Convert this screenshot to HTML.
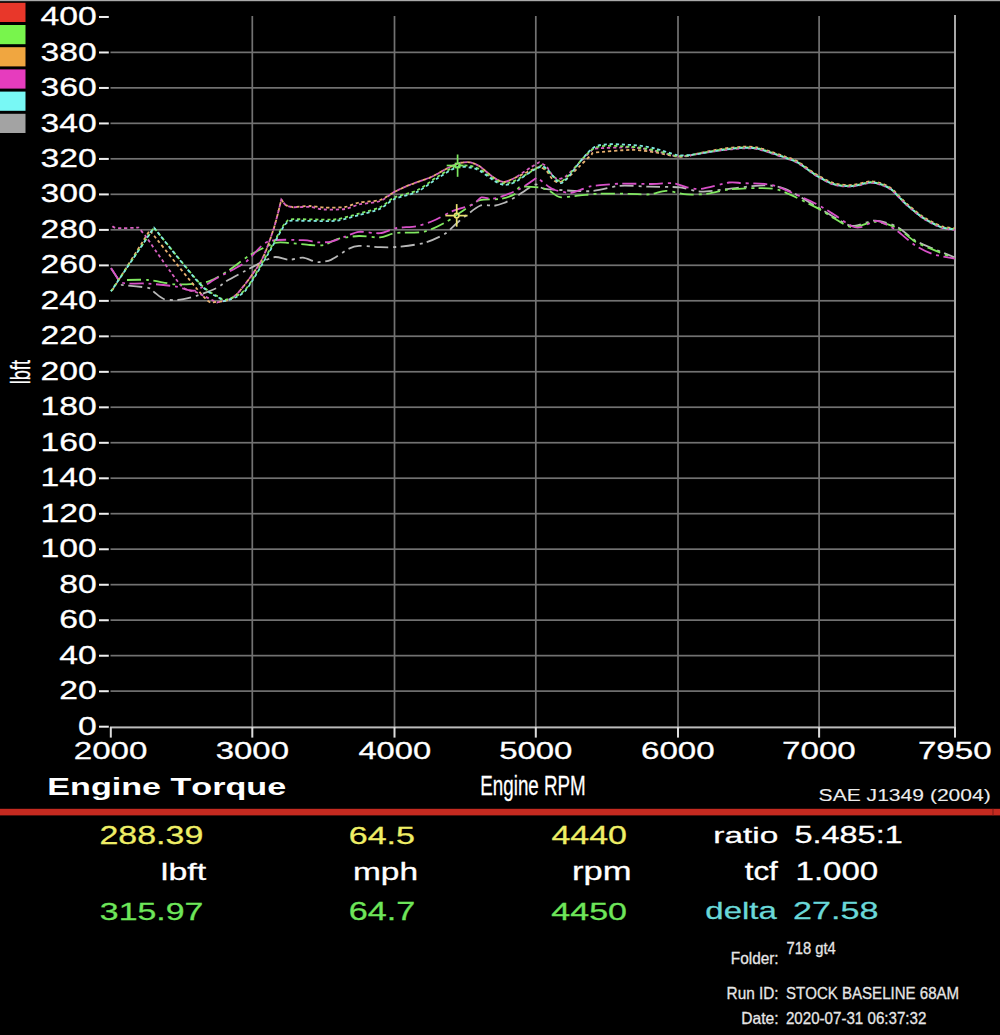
<!DOCTYPE html><html><head><meta charset="utf-8"><style>html,body{margin:0;padding:0;background:#000;width:1000px;height:1035px;overflow:hidden}</style></head><body><svg width="1000" height="1035" viewBox="0 0 1000 1035" style="display:block;font-family:'Liberation Sans',sans-serif;font-kerning:none"><rect x="0" y="0" width="1000" height="1035" fill="#000"/>
<rect x="0" y="0" width="1000" height="1.2" fill="#a9a9a9"/>
<rect x="0" y="2.80" width="25.5" height="19.2" fill="#e8372a"/>
<rect x="0" y="25.00" width="25.5" height="19.2" fill="#78f54c"/>
<rect x="0" y="47.20" width="25.5" height="19.2" fill="#f0a640"/>
<rect x="0" y="69.40" width="25.5" height="19.2" fill="#e63cbe"/>
<rect x="0" y="91.60" width="25.5" height="19.2" fill="#78f8f5"/>
<rect x="0" y="113.80" width="25.5" height="19.2" fill="#a3a3a3"/>
<rect x="110.5" y="690.26" width="844.5" height="1.7" fill="#727272"/>
<rect x="110.5" y="654.78" width="844.5" height="1.7" fill="#727272"/>
<rect x="110.5" y="619.29" width="844.5" height="1.7" fill="#727272"/>
<rect x="110.5" y="583.81" width="844.5" height="1.7" fill="#727272"/>
<rect x="110.5" y="548.32" width="844.5" height="1.7" fill="#727272"/>
<rect x="110.5" y="512.83" width="844.5" height="1.7" fill="#727272"/>
<rect x="110.5" y="477.35" width="844.5" height="1.7" fill="#727272"/>
<rect x="110.5" y="441.86" width="844.5" height="1.7" fill="#727272"/>
<rect x="110.5" y="406.38" width="844.5" height="1.7" fill="#727272"/>
<rect x="110.5" y="370.89" width="844.5" height="1.7" fill="#727272"/>
<rect x="110.5" y="335.40" width="844.5" height="1.7" fill="#727272"/>
<rect x="110.5" y="299.92" width="844.5" height="1.7" fill="#727272"/>
<rect x="110.5" y="264.43" width="844.5" height="1.7" fill="#727272"/>
<rect x="110.5" y="228.95" width="844.5" height="1.7" fill="#727272"/>
<rect x="110.5" y="193.46" width="844.5" height="1.7" fill="#727272"/>
<rect x="110.5" y="157.97" width="844.5" height="1.7" fill="#727272"/>
<rect x="110.5" y="122.49" width="844.5" height="1.7" fill="#727272"/>
<rect x="110.5" y="87.00" width="844.5" height="1.7" fill="#727272"/>
<rect x="110.5" y="51.52" width="844.5" height="1.7" fill="#727272"/>
<rect x="251.45" y="16" width="1.7" height="711.00" fill="#727272"/>
<rect x="393.65" y="16" width="1.7" height="711.00" fill="#727272"/>
<rect x="534.95" y="16" width="1.7" height="711.00" fill="#727272"/>
<rect x="677.15" y="16" width="1.7" height="711.00" fill="#727272"/>
<rect x="818.25" y="16" width="1.7" height="711.00" fill="#727272"/>
<rect x="954" y="15" width="2" height="712" fill="#a8a8a8"/>
<rect x="110" y="726.4" width="846" height="2" fill="#bcbcbc"/>
<rect x="109.80" y="727" width="2" height="10.6" fill="#dcdcdc"/>
<rect x="251.30" y="727" width="2" height="10.6" fill="#dcdcdc"/>
<rect x="393.50" y="727" width="2" height="10.6" fill="#dcdcdc"/>
<rect x="534.80" y="727" width="2" height="10.6" fill="#dcdcdc"/>
<rect x="677.00" y="727" width="2" height="10.6" fill="#dcdcdc"/>
<rect x="818.10" y="727" width="2" height="10.6" fill="#dcdcdc"/>
<rect x="954.00" y="727" width="2" height="10.6" fill="#dcdcdc"/>
<rect x="99" y="725.70" width="9.8" height="2" fill="#eeeeee"/>
<rect x="99" y="690.21" width="9.8" height="2" fill="#eeeeee"/>
<rect x="99" y="654.73" width="9.8" height="2" fill="#eeeeee"/>
<rect x="99" y="619.24" width="9.8" height="2" fill="#eeeeee"/>
<rect x="99" y="583.76" width="9.8" height="2" fill="#eeeeee"/>
<rect x="99" y="548.27" width="9.8" height="2" fill="#eeeeee"/>
<rect x="99" y="512.78" width="9.8" height="2" fill="#eeeeee"/>
<rect x="99" y="477.30" width="9.8" height="2" fill="#eeeeee"/>
<rect x="99" y="441.81" width="9.8" height="2" fill="#eeeeee"/>
<rect x="99" y="406.33" width="9.8" height="2" fill="#eeeeee"/>
<rect x="99" y="370.84" width="9.8" height="2" fill="#eeeeee"/>
<rect x="99" y="335.35" width="9.8" height="2" fill="#eeeeee"/>
<rect x="99" y="299.87" width="9.8" height="2" fill="#eeeeee"/>
<rect x="99" y="264.38" width="9.8" height="2" fill="#eeeeee"/>
<rect x="99" y="228.90" width="9.8" height="2" fill="#eeeeee"/>
<rect x="99" y="193.41" width="9.8" height="2" fill="#eeeeee"/>
<rect x="99" y="157.92" width="9.8" height="2" fill="#eeeeee"/>
<rect x="99" y="122.44" width="9.8" height="2" fill="#eeeeee"/>
<rect x="99" y="86.95" width="9.8" height="2" fill="#eeeeee"/>
<rect x="99" y="51.47" width="9.8" height="2" fill="#eeeeee"/>
<rect x="99" y="15.98" width="9.8" height="2" fill="#eeeeee"/>
<text transform="translate(79.36 734.76) scale(1.3275 1)" x="-0.99" y="0" font-size="25.38" fill="#fff" stroke="#fff" stroke-width="0.28">0</text>
<text transform="translate(61.00 699.27) scale(1.3275 1)" x="-1.28" y="0" font-size="25.38" fill="#fff" stroke="#fff" stroke-width="0.28">20</text>
<text transform="translate(60.08 663.79) scale(1.3275 1)" x="-0.58" y="0" font-size="25.38" fill="#fff" stroke="#fff" stroke-width="0.28">40</text>
<text transform="translate(61.01 628.30) scale(1.3275 1)" x="-1.29" y="0" font-size="25.38" fill="#fff" stroke="#fff" stroke-width="0.28">60</text>
<text transform="translate(60.77 592.82) scale(1.3275 1)" x="-1.10" y="0" font-size="25.38" fill="#fff" stroke="#fff" stroke-width="0.28">80</text>
<text transform="translate(43.13 557.33) scale(1.3275 1)" x="-1.93" y="0" font-size="25.38" fill="#fff" stroke="#fff" stroke-width="0.28">100</text>
<text transform="translate(43.13 521.84) scale(1.3275 1)" x="-1.93" y="0" font-size="25.38" fill="#fff" stroke="#fff" stroke-width="0.28">120</text>
<text transform="translate(43.13 486.36) scale(1.3275 1)" x="-1.93" y="0" font-size="25.38" fill="#fff" stroke="#fff" stroke-width="0.28">140</text>
<text transform="translate(43.13 450.87) scale(1.3275 1)" x="-1.93" y="0" font-size="25.38" fill="#fff" stroke="#fff" stroke-width="0.28">160</text>
<text transform="translate(43.13 415.39) scale(1.3275 1)" x="-1.93" y="0" font-size="25.38" fill="#fff" stroke="#fff" stroke-width="0.28">180</text>
<text transform="translate(42.26 379.90) scale(1.3275 1)" x="-1.28" y="0" font-size="25.38" fill="#fff" stroke="#fff" stroke-width="0.28">200</text>
<text transform="translate(42.26 344.41) scale(1.3275 1)" x="-1.28" y="0" font-size="25.38" fill="#fff" stroke="#fff" stroke-width="0.28">220</text>
<text transform="translate(42.26 308.93) scale(1.3275 1)" x="-1.28" y="0" font-size="25.38" fill="#fff" stroke="#fff" stroke-width="0.28">240</text>
<text transform="translate(42.26 273.44) scale(1.3275 1)" x="-1.28" y="0" font-size="25.38" fill="#fff" stroke="#fff" stroke-width="0.28">260</text>
<text transform="translate(42.26 237.96) scale(1.3275 1)" x="-1.28" y="0" font-size="25.38" fill="#fff" stroke="#fff" stroke-width="0.28">280</text>
<text transform="translate(41.85 202.47) scale(1.3275 1)" x="-0.97" y="0" font-size="25.38" fill="#fff" stroke="#fff" stroke-width="0.28">300</text>
<text transform="translate(41.85 166.98) scale(1.3275 1)" x="-0.97" y="0" font-size="25.38" fill="#fff" stroke="#fff" stroke-width="0.28">320</text>
<text transform="translate(41.85 131.50) scale(1.3275 1)" x="-0.97" y="0" font-size="25.38" fill="#fff" stroke="#fff" stroke-width="0.28">340</text>
<text transform="translate(41.85 96.01) scale(1.3275 1)" x="-0.97" y="0" font-size="25.38" fill="#fff" stroke="#fff" stroke-width="0.28">360</text>
<text transform="translate(41.85 60.53) scale(1.3275 1)" x="-0.97" y="0" font-size="25.38" fill="#fff" stroke="#fff" stroke-width="0.28">380</text>
<text transform="translate(41.34 25.04) scale(1.3275 1)" x="-0.58" y="0" font-size="25.38" fill="#fff" stroke="#fff" stroke-width="0.28">400</text>
<text transform="translate(75.44 759.16) scale(1.3587 1)" x="-1.23" y="0" font-size="24.38" fill="#fff" stroke="#fff" stroke-width="0.28">2000</text>
<text transform="translate(216.94 759.16) scale(1.3510 1)" x="-0.93" y="0" font-size="24.38" fill="#fff" stroke="#fff" stroke-width="0.28">3000</text>
<text transform="translate(359.14 759.16) scale(1.3416 1)" x="-0.56" y="0" font-size="24.38" fill="#fff" stroke="#fff" stroke-width="0.28">4000</text>
<text transform="translate(500.44 759.16) scale(1.3523 1)" x="-0.98" y="0" font-size="24.38" fill="#fff" stroke="#fff" stroke-width="0.28">5000</text>
<text transform="translate(642.64 759.16) scale(1.3591 1)" x="-1.24" y="0" font-size="24.38" fill="#fff" stroke="#fff" stroke-width="0.28">6000</text>
<text transform="translate(783.74 759.16) scale(1.3594 1)" x="-1.25" y="0" font-size="24.38" fill="#fff" stroke="#fff" stroke-width="0.28">7000</text>
<text transform="translate(919.64 759.16) scale(1.3594 1)" x="-1.25" y="0" font-size="24.38" fill="#fff" stroke="#fff" stroke-width="0.28">7950</text>
<text transform="translate(49.60 795.20) scale(1.4048 1)" x="-1.62" y="0" font-size="24.29" font-weight="bold" fill="#fff">Engine Torque</text>
<text transform="translate(481.84 795.46) scale(0.6836 1)" x="-2.26" y="0" font-size="27.49" fill="#fff" stroke="#fff" stroke-width="0.28">Engine RPM</text>
<text transform="translate(819.55 800.65) scale(1.2426 1)" x="-0.77" y="0" font-size="16.97" fill="#ececec" stroke="#ececec" stroke-width="0.10">SAE J1349 (2004)</text>
<g transform="translate(29.9 383.2) rotate(-90)"><text transform="translate(0.14 -0.14) scale(0.6688 1)" x="-1.83" y="0" font-size="27.21" fill="#fff" stroke="#fff" stroke-width="0.28">lbft</text></g>
<rect x="0" y="808.8" width="1000" height="6.6" fill="#c42a20"/>
<rect x="992.5" y="808.8" width="1" height="6.6" fill="#7a1a14"/>
<text transform="translate(101.14 844.36) scale(1.3377 1)" x="-1.28" y="0" font-size="25.38" fill="#eeee66" stroke="#eeee66" stroke-width="0.28">288.39</text>
<text transform="translate(350.54 843.86) scale(1.3867 1)" x="-1.25" y="0" font-size="24.52" fill="#eeee66" stroke="#eeee66" stroke-width="0.28">64.5</text>
<text transform="translate(552.14 844.26) scale(1.3396 1)" x="-0.58" y="0" font-size="25.38" fill="#eeee66" stroke="#eeee66" stroke-width="0.28">4440</text>
<text transform="translate(715.54 843.46) scale(1.4822 1)" x="-1.50" y="0" font-size="22.52" fill="#fff" stroke="#fff" stroke-width="0.28">ratio</text>
<text transform="translate(795.84 843.46) scale(1.3961 1)" x="-0.93" y="0" font-size="23.23" fill="#fff" stroke="#fff" stroke-width="0.28">5.485:1</text>
<text transform="translate(163.14 880.36) scale(1.3872 1)" x="-1.65" y="0" font-size="24.45" fill="#fff" stroke="#fff" stroke-width="0.28">lbft</text>
<text transform="translate(355.14 880.36) scale(1.4168 1)" x="-1.57" y="0" font-size="23.63" fill="#fff" stroke="#fff" stroke-width="0.28">mph</text>
<text transform="translate(574.34 880.26) scale(1.3499 1)" x="-1.70" y="0" font-size="25.59" fill="#fff" stroke="#fff" stroke-width="0.28">rpm</text>
<text transform="translate(745.14 880.46) scale(1.2610 1)" x="-0.38" y="0" font-size="24.90" fill="#fff" stroke="#fff" stroke-width="0.28">tcf</text>
<text transform="translate(798.04 880.46) scale(1.2810 1)" x="-1.97" y="0" font-size="25.81" fill="#fff" stroke="#fff" stroke-width="0.28">1.000</text>
<text transform="translate(101.14 919.76) scale(1.3723 1)" x="-0.94" y="0" font-size="24.66" fill="#6ee65a" stroke="#6ee65a" stroke-width="0.28">315.97</text>
<text transform="translate(350.54 919.86) scale(1.3458 1)" x="-1.29" y="0" font-size="25.38" fill="#6ee65a" stroke="#6ee65a" stroke-width="0.28">64.7</text>
<text transform="translate(552.14 919.86) scale(1.3865 1)" x="-0.56" y="0" font-size="24.52" fill="#6ee65a" stroke="#6ee65a" stroke-width="0.28">4450</text>
<text transform="translate(706.74 919.36) scale(1.3796 1)" x="-1.00" y="0" font-size="23.90" fill="#6ad8d8" stroke="#6ad8d8" stroke-width="0.28">delta</text>
<text transform="translate(794.74 919.36) scale(1.3761 1)" x="-1.25" y="0" font-size="24.81" fill="#6ad8d8" stroke="#6ad8d8" stroke-width="0.28">27.58</text>
<text transform="translate(732.04 963.56) scale(0.9595 1)" x="-1.32" y="0" font-size="16.04" fill="#e6e6e6" stroke="#e6e6e6" stroke-width="0.28">Folder:</text>
<text transform="translate(787.34 954.46) scale(0.9431 1)" x="-0.80" y="0" font-size="15.64" fill="#e6e6e6" stroke="#e6e6e6" stroke-width="0.28">718 gt4</text>
<text transform="translate(727.84 999.26) scale(0.9096 1)" x="-1.39" y="0" font-size="16.89" fill="#e6e6e6" stroke="#e6e6e6" stroke-width="0.28">Run ID:</text>
<text transform="translate(786.64 999.26) scale(0.9049 1)" x="-0.76" y="0" font-size="16.64" fill="#e6e6e6" stroke="#e6e6e6" stroke-width="0.28">STOCK BASELINE 68AM</text>
<text transform="translate(742.54 1024.46) scale(0.9868 1)" x="-1.30" y="0" font-size="15.87" fill="#e6e6e6" stroke="#e6e6e6" stroke-width="0.28">Date:</text>
<text transform="translate(786.64 1024.46) scale(0.9685 1)" x="-0.79" y="0" font-size="15.64" fill="#e6e6e6" stroke="#e6e6e6" stroke-width="0.28">2020-07-31 06:37:32</text>
<path d="M111.00,268.20 C111.00,268.20 121.80,285.00 121.80,285.00 C121.80,285.00 143.71,286.87 148.00,287.80 C152.29,288.73 151.89,290.51 154.00,292.00 C156.11,293.49 160.63,297.93 163.80,299.00 C166.97,300.07 173.51,300.40 177.80,300.00 C182.09,299.60 190.77,297.63 196.00,296.00 C201.23,294.37 212.87,289.83 217.00,287.80 C221.13,285.77 223.27,283.04 227.00,280.80 C230.73,278.56 240.47,273.43 245.00,271.00 C249.53,268.57 257.00,264.47 261.00,262.60 C265.00,260.73 271.27,257.37 275.00,257.00 C278.73,256.63 285.27,259.71 289.00,259.80 C292.73,259.89 299.27,257.41 303.00,257.70 C306.73,257.99 313.27,261.72 317.00,262.00 C320.73,262.28 326.73,261.59 331.00,259.80 C335.27,258.01 345.27,250.47 349.00,248.60 C352.73,246.73 354.87,245.99 359.00,245.80 C363.13,245.61 375.07,247.04 380.00,247.20 C384.93,247.36 390.13,247.56 396.00,247.00 C401.87,246.44 417.47,244.76 424.00,243.00 C430.53,241.24 440.33,236.71 445.00,233.80 C449.67,230.89 454.33,224.93 459.00,221.20 C463.67,217.47 475.33,207.85 480.00,205.80 C484.67,203.75 490.83,206.17 494.00,205.80 C497.17,205.43 501.00,204.12 503.80,203.00 C506.60,201.88 510.84,199.85 515.00,197.40 C519.16,194.95 531.00,185.75 535.00,184.60 C539.00,183.45 537.67,187.92 545.00,188.80 C552.33,189.68 580.00,191.60 590.00,191.20 C600.00,190.80 612.00,186.40 620.00,185.80 C628.00,185.20 642.00,186.49 650.00,186.70 C658.00,186.91 673.20,186.75 680.00,187.40 C686.80,188.05 694.47,191.41 701.00,191.60 C707.53,191.79 720.60,189.64 729.00,188.80 C737.40,187.96 756.53,185.30 764.00,185.30 C771.47,185.30 778.07,186.01 785.00,188.80 C791.93,191.59 809.47,202.44 816.00,206.20 C822.53,209.96 829.20,214.36 834.00,217.00 C838.80,219.64 846.53,225.52 852.00,226.00 C857.47,226.48 869.00,220.49 875.00,220.60 C881.00,220.71 891.67,224.16 897.00,226.80 C902.33,229.44 910.20,237.51 915.00,240.40 C919.80,243.29 927.67,246.22 933.00,248.50 C938.33,250.78 955.00,257.50 955.00,257.50" fill="none" stroke="#b8b8b8" stroke-width="1.8" stroke-dasharray="14 5 3 4.5" stroke-dashoffset="0.0" stroke-opacity="1.00"/>
<path d="M127.00,280.00 C127.00,280.00 141.60,279.43 148.00,280.00 C154.40,280.57 168.60,283.82 175.00,284.30 C181.40,284.78 191.33,284.07 196.00,283.60 C200.67,283.13 205.73,282.48 210.00,280.80 C214.27,279.12 223.33,273.99 228.00,271.00 C232.67,268.01 241.53,260.83 245.00,258.40 C248.47,255.97 250.00,254.85 254.00,252.80 C258.00,250.75 270.33,244.31 275.00,243.00 C279.67,241.69 284.33,242.73 289.00,243.00 C293.67,243.27 305.33,244.73 310.00,245.00 C314.67,245.27 320.27,245.83 324.00,245.00 C327.73,244.17 333.33,240.00 338.00,238.80 C342.67,237.60 353.40,236.19 359.00,236.00 C364.60,235.81 375.07,237.80 380.00,237.40 C384.93,237.00 390.13,233.76 396.00,233.00 C401.87,232.24 417.47,233.09 424.00,231.70 C430.53,230.31 439.40,225.68 445.00,222.60 C450.60,219.52 461.33,211.59 466.00,208.60 C470.67,205.61 475.33,201.51 480.00,200.20 C484.67,198.89 496.33,199.63 501.00,198.80 C505.67,197.97 512.47,195.57 515.00,194.00 C517.53,192.43 516.67,187.85 520.00,187.00 C523.33,186.15 536.00,187.04 540.00,187.60 C544.00,188.16 547.33,189.92 550.00,191.20 C552.67,192.48 556.00,196.64 560.00,197.20 C564.00,197.76 574.67,195.88 580.00,195.40 C585.33,194.92 593.47,193.81 600.00,193.60 C606.53,193.39 622.33,193.69 629.00,193.80 C635.67,193.91 645.07,194.79 650.00,194.40 C654.93,194.01 661.07,190.90 666.00,190.90 C670.93,190.90 681.40,194.03 687.00,194.40 C692.60,194.77 702.40,194.35 708.00,193.70 C713.60,193.05 722.47,190.25 729.00,189.50 C735.53,188.75 750.20,187.99 757.00,188.10 C763.80,188.21 772.13,187.73 780.00,190.30 C787.87,192.87 808.80,203.68 816.00,207.40 C823.20,211.12 829.20,215.56 834.00,218.20 C838.80,220.84 846.53,226.72 852.00,227.20 C857.47,227.68 869.00,221.69 875.00,221.80 C881.00,221.91 891.67,225.36 897.00,228.00 C902.33,230.64 910.20,238.71 915.00,241.60 C919.80,244.49 927.67,247.42 933.00,249.70 C938.33,251.98 955.00,258.70 955.00,258.70" fill="none" stroke="#80e860" stroke-width="1.8" stroke-dasharray="14 5 3 4.5" stroke-dashoffset="0.0" stroke-opacity="1.00"/>
<path d="M111.00,268.00 C111.00,268.00 120.00,282.00 120.00,282.00 C120.00,282.00 123.27,283.39 127.00,283.60 C130.73,283.81 141.60,283.23 148.00,283.60 C154.40,283.97 168.79,285.47 175.00,286.40 C181.21,287.33 189.00,291.72 194.60,290.60 C200.20,289.48 210.28,281.73 217.00,278.00 C223.72,274.27 238.20,267.45 245.00,262.60 C251.80,257.75 260.27,244.59 268.00,241.60 C275.73,238.61 296.47,240.11 303.00,240.20 C309.53,240.29 313.27,242.11 317.00,242.30 C320.73,242.49 327.27,242.35 331.00,241.60 C334.73,240.85 341.27,238.01 345.00,236.70 C348.73,235.39 354.33,232.27 359.00,231.80 C363.67,231.33 375.07,233.68 380.00,233.20 C384.93,232.72 391.07,229.15 396.00,228.20 C400.93,227.25 411.96,227.13 417.00,226.10 C422.04,225.07 429.13,222.46 433.80,220.50 C438.47,218.54 446.77,213.55 452.00,211.40 C457.23,209.25 469.08,206.27 473.00,204.40 C476.92,202.53 478.97,198.15 481.40,197.40 C483.83,196.65 488.59,198.89 491.20,198.80 C493.81,198.71 497.16,198.03 501.00,196.70 C504.84,195.37 515.20,191.37 520.00,188.80 C524.80,186.23 537.00,177.40 537.00,177.40 C537.00,177.40 547.60,185.92 550.00,187.60 C552.40,189.28 552.33,189.28 555.00,190.00 C557.67,190.72 566.67,193.00 570.00,193.00 C573.33,193.00 577.33,190.88 580.00,190.00 C582.67,189.12 587.33,187.04 590.00,186.40 C592.67,185.76 595.73,185.57 600.00,185.20 C604.27,184.83 615.33,183.76 622.00,183.60 C628.67,183.44 643.20,184.05 650.00,184.00 C656.80,183.95 668.07,182.75 673.00,183.20 C677.93,183.65 683.27,186.65 687.00,187.40 C690.73,188.15 695.40,189.45 701.00,188.80 C706.60,188.15 723.40,183.25 729.00,182.50 C734.60,181.75 738.33,183.01 743.00,183.20 C747.67,183.39 759.07,183.31 764.00,183.90 C768.93,184.49 773.07,184.95 780.00,187.60 C786.93,190.25 808.80,200.20 816.00,203.80 C823.20,207.40 829.20,211.60 834.00,214.60 C838.80,217.60 848.40,224.62 852.00,226.30 C855.60,227.98 857.88,227.92 861.00,227.20 C864.12,226.48 872.28,221.38 875.40,220.90 C878.52,220.42 881.52,222.28 884.40,223.60 C887.28,224.92 892.92,227.92 897.00,230.80 C901.08,233.68 910.20,242.08 915.00,245.20 C919.80,248.32 927.67,252.40 933.00,254.20 C938.33,256.00 955.00,258.70 955.00,258.70" fill="none" stroke="#d850c8" stroke-width="1.8" stroke-dasharray="14 5 3 4.5" stroke-dashoffset="0.0" stroke-opacity="1.00"/>
<path d="M112.00,290.60 C112.00,290.60 149.80,230.40 149.80,230.40 C149.80,230.40 194.31,286.45 203.00,296.00 C211.69,305.55 210.73,302.00 215.00,302.00 C219.27,302.00 228.87,301.44 235.00,296.00 C241.13,290.56 255.85,270.13 261.00,261.20 C266.15,252.27 270.89,237.21 273.60,229.00 C276.31,220.79 281.30,199.60 281.30,199.60 C281.30,199.60 284.41,204.17 286.00,205.20 C287.59,206.23 293.20,207.30 293.20,207.30 C293.20,207.30 305.89,205.97 310.00,206.00 C314.11,206.03 319.33,207.37 324.00,207.50 C328.67,207.63 340.33,207.67 345.00,207.00 C349.67,206.33 354.33,203.43 359.00,202.50 C363.67,201.57 375.25,201.43 380.00,200.00 C384.75,198.57 390.60,193.83 394.60,191.80 C398.60,189.77 405.15,186.76 410.00,184.80 C414.85,182.84 425.96,179.34 431.00,177.10 C436.04,174.86 444.07,169.87 447.80,168.00 C451.53,166.13 456.01,163.85 459.00,163.10 C461.99,162.35 467.40,161.93 470.20,162.40 C473.00,162.87 476.83,164.55 480.00,166.60 C483.17,168.65 490.83,175.75 494.00,177.80 C497.17,179.85 501.00,182.00 503.80,182.00 C506.60,182.00 511.37,179.36 515.00,177.80 C518.63,176.24 527.75,171.73 531.00,170.30 C534.25,168.87 537.35,167.02 539.40,167.08 C541.45,167.14 544.72,169.22 546.40,170.76 C548.08,172.30 550.51,177.07 552.00,178.60 C553.49,180.13 555.73,182.13 557.60,182.24 C559.47,182.35 563.01,181.58 566.00,179.40 C568.99,177.22 576.64,169.12 580.00,165.87 C583.36,162.61 589.15,156.78 591.20,155.00 C593.25,153.22 589.96,153.18 595.40,152.50 C600.84,151.82 624.05,149.92 632.00,149.90 C639.95,149.88 649.00,151.45 655.00,152.36 C661.00,153.27 672.33,156.31 677.00,156.73 C681.67,157.15 690.00,155.53 690.00,155.53" fill="none" stroke="#e8b070" stroke-width="1.8" stroke-dasharray="3.2 2.8" stroke-dashoffset="0.0" stroke-opacity="1.00"/>
<path d="M690.00,155.53 C690.00,155.53 696.73,153.72 701.00,152.82 C705.27,151.93 716.40,149.62 722.00,148.80 C727.60,147.98 738.33,146.89 743.00,146.70 C747.67,146.51 753.27,146.75 757.00,147.40 C760.73,148.05 767.27,150.39 771.00,151.60 C774.73,152.81 781.40,155.17 785.00,156.50 C788.60,157.83 793.87,159.24 798.00,161.60 C802.13,163.96 811.20,171.32 816.00,174.20 C820.80,177.08 829.20,181.76 834.00,183.20 C838.80,184.64 847.20,185.24 852.00,185.00 C856.80,184.76 866.16,181.64 870.00,181.40 C873.84,181.16 877.92,182.24 880.80,183.20 C883.68,184.16 888.24,185.96 891.60,188.60 C894.96,191.24 901.68,199.16 906.00,203.00 C910.32,206.84 919.20,214.28 924.00,217.40 C928.80,220.52 937.87,224.96 942.00,226.40 C946.13,227.84 955.00,228.20 955.00,228.20" fill="none" stroke="#e8b070" stroke-width="1.8" stroke-dasharray="3.2 2.8" stroke-dashoffset="0.0" stroke-opacity="1.00"/>
<path d="M110.60,224.00 C110.60,224.00 112.27,227.52 116.00,228.00 C119.73,228.48 138.60,227.60 138.60,227.60 C138.60,227.60 145.60,236.00 145.60,236.00 C145.60,236.00 173.88,277.53 180.60,285.00 C187.32,292.47 191.15,289.67 196.00,292.00 C200.85,294.33 217.00,302.50 217.00,302.50 C217.00,302.50 226.93,300.59 230.00,299.00 C233.07,297.41 235.87,295.64 240.00,290.60 C244.13,285.56 256.52,269.41 261.00,261.20 C265.48,252.99 270.89,237.21 273.60,229.00 C276.31,220.79 281.30,199.60 281.30,199.60 C281.30,199.60 284.41,204.17 286.00,205.20 C287.59,206.23 293.20,207.30 293.20,207.30 C293.20,207.30 305.89,206.71 310.00,207.00 C314.11,207.29 319.33,209.23 324.00,209.50 C328.67,209.77 340.33,209.67 345.00,209.00 C349.67,208.33 354.33,205.57 359.00,204.50 C363.67,203.43 375.25,202.69 380.00,201.00 C384.75,199.31 390.60,193.96 394.60,191.80 C398.60,189.64 405.15,186.76 410.00,184.80 C414.85,182.84 425.96,179.34 431.00,177.10 C436.04,174.86 444.07,169.87 447.80,168.00 C451.53,166.13 456.01,163.85 459.00,163.10 C461.99,162.35 467.40,161.93 470.20,162.40 C473.00,162.87 476.83,164.55 480.00,166.60 C483.17,168.65 490.83,175.75 494.00,177.80 C497.17,179.85 501.00,182.00 503.80,182.00 C506.60,182.00 511.37,179.79 515.00,177.80 C518.63,175.81 527.75,169.18 531.00,167.10 C534.25,165.02 539.40,162.20 539.40,162.20 C539.40,162.20 544.72,164.72 546.40,166.40 C548.08,168.08 550.51,173.12 552.00,174.80 C553.49,176.48 555.73,178.81 557.60,179.00 C559.47,179.19 563.01,178.44 566.00,176.20 C568.99,173.96 576.64,165.56 580.00,162.20 C583.36,158.84 589.15,152.83 591.20,151.00 C593.25,149.17 589.96,148.97 595.40,148.50 C600.84,148.03 624.05,147.17 632.00,147.50 C639.95,147.83 649.00,149.83 655.00,151.00 C661.00,152.17 672.33,155.70 677.00,156.30 C681.67,156.90 690.00,155.50 690.00,155.50" fill="none" stroke="#d860c0" stroke-width="1.8" stroke-dasharray="3.2 2.8" stroke-dashoffset="3.0" stroke-opacity="1.00"/>
<path d="M690.00,155.50 C690.00,155.50 696.73,154.07 701.00,153.39 C705.27,152.71 716.40,151.08 722.00,150.40 C727.60,149.72 738.33,148.49 743.00,148.30 C747.67,148.11 753.27,148.35 757.00,149.00 C760.73,149.65 767.27,151.99 771.00,153.20 C774.73,154.41 781.40,156.77 785.00,158.10 C788.60,159.43 793.87,160.84 798.00,163.20 C802.13,165.56 811.20,172.92 816.00,175.80 C820.80,178.68 829.20,183.36 834.00,184.80 C838.80,186.24 847.20,186.84 852.00,186.60 C856.80,186.36 866.16,183.24 870.00,183.00 C873.84,182.76 877.92,183.84 880.80,184.80 C883.68,185.76 888.24,187.56 891.60,190.20 C894.96,192.84 901.68,200.76 906.00,204.60 C910.32,208.44 919.20,215.88 924.00,219.00 C928.80,222.12 937.87,226.56 942.00,228.00 C946.13,229.44 955.00,229.80 955.00,229.80" fill="none" stroke="#d860c0" stroke-width="1.8" stroke-dasharray="3.2 2.8" stroke-dashoffset="1.5" stroke-opacity="1.00"/>
<path d="M111.00,291.30 C111.00,291.30 154.00,227.60 154.00,227.60 C154.00,227.60 191.20,274.27 200.00,283.60 C208.80,292.93 216.67,295.41 220.00,297.60 C223.33,299.79 221.67,301.01 225.00,300.00 C228.33,298.99 239.27,296.29 245.00,290.00 C250.73,283.71 263.07,261.12 268.00,252.80 C272.93,244.48 279.39,231.89 282.00,227.60 C284.61,223.31 287.60,220.60 287.60,220.60 C287.60,220.60 288.35,219.33 293.20,219.20 C298.05,219.07 318.03,219.63 324.00,219.60 C329.97,219.57 333.33,219.80 338.00,219.00 C342.67,218.20 353.40,215.16 359.00,213.60 C364.60,212.04 375.25,209.46 380.00,207.30 C384.75,205.14 389.67,199.65 394.60,197.40 C399.53,195.15 411.21,193.20 417.00,190.40 C422.79,187.60 432.77,179.65 438.00,176.40 C443.23,173.15 451.91,167.39 456.20,166.00 C460.49,164.61 467.03,165.55 470.20,166.00 C473.37,166.45 476.83,167.64 480.00,169.40 C483.17,171.16 490.83,177.33 494.00,179.20 C497.17,181.07 501.00,183.21 503.80,183.40 C506.60,183.59 509.88,183.05 515.00,180.60 C520.12,178.15 542.20,165.00 542.20,165.00 C542.20,165.00 554.83,178.67 558.00,180.40 C561.17,182.13 561.09,182.32 566.00,178.00 C570.91,173.68 586.00,152.13 594.80,148.00 C603.60,143.87 623.97,146.67 632.00,147.00 C640.03,147.33 649.00,149.30 655.00,150.50 C661.00,151.70 672.33,155.37 677.00,156.00 C681.67,156.63 690.00,155.20 690.00,155.20" fill="none" stroke="#80e860" stroke-width="1.8" stroke-dasharray="3.2 2.8" stroke-dashoffset="0.0" stroke-opacity="1.00"/>
<path d="M690.00,155.20 C690.00,155.20 696.73,153.85 701.00,153.10 C705.27,152.35 716.40,150.35 722.00,149.60 C727.60,148.85 738.33,147.69 743.00,147.50 C747.67,147.31 753.27,147.55 757.00,148.20 C760.73,148.85 767.27,151.19 771.00,152.40 C774.73,153.61 781.40,155.97 785.00,157.30 C788.60,158.63 793.87,160.04 798.00,162.40 C802.13,164.76 811.20,172.12 816.00,175.00 C820.80,177.88 829.20,182.56 834.00,184.00 C838.80,185.44 847.20,186.04 852.00,185.80 C856.80,185.56 866.16,182.44 870.00,182.20 C873.84,181.96 877.92,183.04 880.80,184.00 C883.68,184.96 888.24,186.76 891.60,189.40 C894.96,192.04 901.68,199.96 906.00,203.80 C910.32,207.64 919.20,215.08 924.00,218.20 C928.80,221.32 937.87,225.76 942.00,227.20 C946.13,228.64 955.00,229.00 955.00,229.00" fill="none" stroke="#80e860" stroke-width="1.8" stroke-dasharray="3.2 2.8" stroke-dashoffset="3.0" stroke-opacity="1.00"/>
<path d="M111.00,291.30 C111.00,291.30 154.00,227.65 154.00,227.65 C154.00,227.65 191.20,274.74 200.00,284.18 C208.80,293.61 216.67,296.18 220.00,298.41 C223.33,300.63 221.67,301.84 225.00,300.87 C228.33,299.89 239.27,297.32 245.00,291.10 C250.73,284.87 263.07,262.43 268.00,254.16 C272.93,245.90 279.39,233.37 282.00,229.10 C284.61,224.83 286.11,223.22 287.60,222.10 C289.09,220.98 288.35,220.83 293.20,220.70 C298.05,220.57 318.03,221.13 324.00,221.10 C329.97,221.07 333.33,221.30 338.00,220.50 C342.67,219.70 353.40,216.66 359.00,215.10 C364.60,213.54 375.25,210.96 380.00,208.80 C384.75,206.64 389.67,201.15 394.60,198.90 C399.53,196.65 411.21,194.70 417.00,191.90 C422.79,189.10 432.77,181.15 438.00,177.90 C443.23,174.65 451.91,168.89 456.20,167.50 C460.49,166.11 467.03,167.05 470.20,167.50 C473.37,167.95 476.83,169.14 480.00,170.90 C483.17,172.66 490.83,178.83 494.00,180.70 C497.17,182.57 501.00,184.71 503.80,184.90 C506.60,185.09 509.88,184.55 515.00,182.10 C520.12,179.65 536.47,166.53 542.20,166.50 C547.93,166.47 554.83,180.17 558.00,181.90 C561.17,183.63 561.09,184.17 566.00,179.50 C570.91,174.83 586.00,151.51 594.80,146.91 C603.60,142.31 623.97,144.79 632.00,145.00 C640.03,145.21 649.00,147.16 655.00,148.50 C661.00,149.84 672.33,154.15 677.00,155.02 C681.67,155.89 690.00,155.00 690.00,155.00" fill="none" stroke="#80e8e0" stroke-width="1.8" stroke-dasharray="3.2 2.8" stroke-dashoffset="1.5" stroke-opacity="1.00"/>
<path d="M690.00,155.00 C690.00,155.00 696.73,154.17 701.00,153.50 C705.27,152.83 716.40,150.75 722.00,150.00 C727.60,149.25 738.33,148.09 743.00,147.90 C747.67,147.71 753.27,147.95 757.00,148.60 C760.73,149.25 767.27,151.59 771.00,152.80 C774.73,154.01 781.40,156.37 785.00,157.70 C788.60,159.03 793.87,160.44 798.00,162.80 C802.13,165.16 811.20,172.52 816.00,175.40 C820.80,178.28 829.20,182.96 834.00,184.40 C838.80,185.84 847.20,186.44 852.00,186.20 C856.80,185.96 866.16,182.84 870.00,182.60 C873.84,182.36 877.92,183.44 880.80,184.40 C883.68,185.36 888.24,187.16 891.60,189.80 C894.96,192.44 901.68,200.36 906.00,204.20 C910.32,208.04 919.20,215.48 924.00,218.60 C928.80,221.72 937.87,226.16 942.00,227.60 C946.13,229.04 955.00,229.40 955.00,229.40" fill="none" stroke="#80e8e0" stroke-width="1.8" stroke-dasharray="3.2 2.8" stroke-dashoffset="4.5" stroke-opacity="1.00"/>
<g stroke="#7ee860" stroke-width="1.7" fill="none"><line x1="457.6" y1="154.5" x2="457.6" y2="163.5"/><line x1="457.6" y1="167.5" x2="457.6" y2="176.8"/><line x1="446.7" y1="165.5" x2="455.6" y2="165.5"/><line x1="459.6" y1="165.5" x2="463.7" y2="165.5"/><rect x="455.6" y="163.5" width="4" height="4"/></g>
<g stroke="#e8e070" stroke-width="1.7" fill="none"><line x1="456.7" y1="204.1" x2="456.7" y2="213"/><line x1="456.7" y1="218.2" x2="456.7" y2="226.7"/><line x1="445.4" y1="215.6" x2="454.2" y2="215.6"/><line x1="459.2" y1="215.6" x2="467.6" y2="215.6"/><circle cx="456.7" cy="215.6" r="2.3"/></g></svg></body></html>
